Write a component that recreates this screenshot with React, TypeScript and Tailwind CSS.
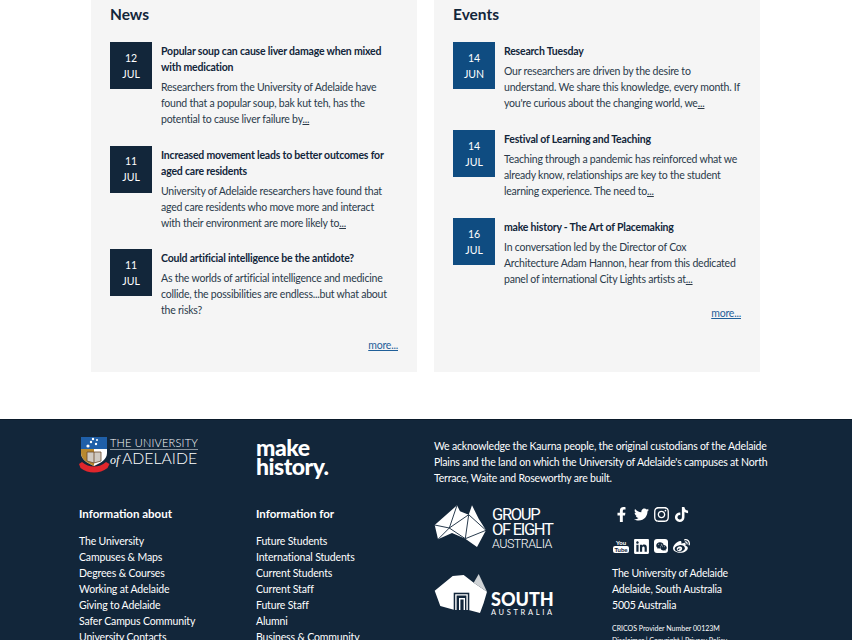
import { FaFacebookF, FaInstagram, FaLinkedin, FaTiktok, FaTwitter, FaWeibo, FaWeixin } from "react-icons/fa";

const news = [
  {
    day: "12",
    month: "JUL",
    title: ["Popular soup can cause liver damage when mixed", "with medication"],
    body: [
      "Researchers from the University of Adelaide have",
      "found that a popular soup, bak kut teh, has the",
      "potential to cause liver failure by",
    ],
    dots: true,
  },
  {
    day: "11",
    month: "JUL",
    title: ["Increased movement leads to better outcomes for", "aged care residents"],
    body: [
      "University of Adelaide researchers have found that",
      "aged care residents who move more and interact",
      "with their environment are more likely to",
    ],
    dots: true,
  },
  {
    day: "11",
    month: "JUL",
    title: ["Could artificial intelligence be the antidote?"],
    body: [
      "As the worlds of artificial intelligence and medicine",
      "collide, the possibilities are endless...but what about",
      "the risks?",
    ],
    dots: false,
  },
];

const events = [
  {
    day: "14",
    month: "JUN",
    title: ["Research Tuesday"],
    body: [
      "Our researchers are driven by the desire to",
      "understand. We share this knowledge, every month. If",
      "you're curious about the changing world, we",
    ],
    dots: true,
  },
  {
    day: "14",
    month: "JUL",
    title: ["Festival of Learning and Teaching"],
    body: [
      "Teaching through a pandemic has reinforced what we",
      "already know, relationships are key to the student",
      "learning experience. The need to",
    ],
    dots: true,
  },
  {
    day: "16",
    month: "JUL",
    title: ["make history - The Art of Placemaking"],
    body: [
      "In conversation led by the Director of Cox",
      "Architecture Adam Hannon, hear from this dedicated",
      "panel of international City Lights artists at",
    ],
    dots: true,
  },
];

const infoAbout = [
  "The University",
  "Campuses & Maps",
  "Degrees & Courses",
  "Working at Adelaide",
  "Giving to Adelaide",
  "Safer Campus Community",
  "University Contacts",
];

const infoFor = [
  "Future Students",
  "International Students",
  "Current Students",
  "Current Staff",
  "Future Staff",
  "Alumni",
  "Business & Community",
];

type Item = (typeof news)[number];

function Story({ item, boxColor }: { item: Item; boxColor: string }) {
  return (
    <div className="flex">
      <div
        className={`flex h-[47px] w-[42px] shrink-0 flex-col items-center justify-center text-[10.5px] leading-[16px] text-white ${boxColor}`}
      >
        <span>{item.day}</span>
        <span>{item.month}</span>
      </div>
      <div className="ml-[9px] whitespace-nowrap pt-px">
        <h3 className="text-[10.5px] font-bold leading-[16px] tracking-[-0.2px] text-[#12263a]">
          {item.title.map((line) => (
            <div key={line}>{line}</div>
          ))}
        </h3>
        <p className="mt-1 text-[10.5px] leading-[16px] tracking-[-0.22px] text-[#2a3a4a]">
          {item.body.map((line, i) => (
            <span key={line} className="block">
              {line}
              {item.dots && i === item.body.length - 1 && <span className="underline">...</span>}
            </span>
          ))}
        </p>
      </div>
    </div>
  );
}

function Crest() {
  return (
    <svg width="32" height="40" viewBox="2 2 32 40" className="-ml-px -mt-[2px] shrink-0">
      <path d="M5 3h26v16c0 6-6 10-13 13C11 29 5 25 5 19z" fill="#fff" />
      <path d="M5 3h26v12H5z" fill="#1f5fa8" />
      <path d="M5 15h13v17C11 29 5 25 5 19z" fill="#b8892e" />
      <path d="M11 18h14v9l-7 2-7-2z" fill="#cfcac2" stroke="#6b4a2b" strokeWidth="0.8" />
      <path d="M18 18v11" stroke="#6b4a2b" strokeWidth="0.8" />
      <circle cx="17" cy="5" r="1.2" fill="#fff" />
      <circle cx="21" cy="6" r="1" fill="#fff" />
      <circle cx="15" cy="8" r="1.2" fill="#fff" />
      <circle cx="20" cy="10" r="1.2" fill="#fff" />
      <circle cx="12" cy="12" r="1.6" fill="#fff" />
      <path d="M3 30l3-2c7 6 17 6 24 0l3.5 2-2 4c-8 6-19 6-27 0z" fill="#e0262c" />
    </svg>
  );
}

function Go8Mark() {
  return (
    <svg width="53" height="44" viewBox="2 2 53 44" className="shrink-0">
      <path
        d="M2.7 23 25 3.3l3 6 8.7 3.4L40 3.3l6.7 13.4L54 28.3 45 45l-11.7-8.3L20 31 6 37.3z"
        fill="#fff"
      />
      <path
        d="M2.7 23 17.3 26 25 3.3M17.3 26 36.7 12.7 33.3 36.7 17.3 26M33.3 36.7 54 28.3 36.7 12.7M6 37.3 17.3 26"
        fill="none"
        stroke="#12263a"
        strokeWidth="0.9"
      />
    </svg>
  );
}

function SaMark() {
  return (
    <svg width="54" height="42" viewBox="2 3 54 42" className="shrink-0">
      <path d="M2.7 20.7 20.7 6 31.7 5l10 7.7L55 21.7 51.7 33 48 43 36.7 40H22.7L8.3 36z" fill="#fff" />
      <path d="M41.7 12.7 46.7 4 55 21.7z" fill="#cfd3d6" />
      <path d="M21.7 40V22.7h15.6V40z" fill="#12263a" />
      <path d="M23.2 40V24.2h12.6V40h-1.4V25.6h-9.8V40z" fill="#fff" />
      <path d="M27 40V28h6v12h-1.4V29.4h-3.2V40z" fill="#fff" />
    </svg>
  );
}

export default function App() {
  return (
    <div className="h-[640px] w-[852px] overflow-hidden bg-white font-['Lato',sans-serif]">
      <div className="flex h-[372px] gap-[17px] pl-[91px]">
        <section className="flex w-[326px] flex-col bg-[#f5f5f5] pl-[19px] pr-[19px]">
          <h2 className="mt-[3px] h-[39px] text-[15.5px] font-bold leading-[22px] text-[#12263a]">News</h2>
          <div className="flex flex-col gap-[18.5px]">
            {news.map((item) => (
              <Story key={item.title[0]} item={item} boxColor="bg-[#12263a]" />
            ))}
          </div>
          <a className="mt-[19px] self-end text-[10.5px] leading-[16px] tracking-[-0.2px] text-[#1f5f99] underline">more...</a>
        </section>
        <section className="flex w-[326px] flex-col bg-[#f5f5f5] pl-[19px] pr-[19px]">
          <h2 className="mt-[3px] h-[39px] text-[15.5px] font-bold leading-[22px] text-[#12263a]">Events</h2>
          <div className="flex flex-col gap-[19px]">
            {events.map((item) => (
              <Story key={item.title[0]} item={item} boxColor="bg-[#0f4c81]" />
            ))}
          </div>
          <a className="mt-[18px] self-end text-[10.5px] leading-[16px] tracking-[-0.2px] text-[#1f5f99] underline">more...</a>
        </section>
      </div>

      <footer className="mt-[47px] grid h-[221px] grid-cols-[177px_178px_178px_1fr] content-start border-t border-[#0b1a2a] bg-[#12263a] pl-[79px] pt-[18px] text-white">
        <div>
          <div className="flex h-[40px] items-start">
            <Crest />
            <div className="whitespace-nowrap">
              <div className="-mt-px border-b border-white/50 pb-[1px] text-[11px] font-light leading-[11px] tracking-[0.2px]">
                THE UNIVERSITY
              </div>
              <div className="flex items-baseline text-[15.8px] font-light leading-[15px]">
                <i className="w-[12px] font-['Liberation_Serif',serif] text-[12px]">of</i>ADELAIDE
              </div>
            </div>
          </div>
          <h4 className="mt-[28px] text-[11.5px] font-bold leading-[16px]">Information about</h4>
          <ul className="mt-[11px] text-[10.5px] leading-[16px] tracking-[-0.15px]">
            {infoAbout.map((link) => (
              <li key={link}>{link}</li>
            ))}
          </ul>
        </div>

        <div>
          <div className="h-[40px] text-[23px] font-black leading-[19px] tracking-[-0.5px]">
            make
            <br />
            history.
          </div>
          <h4 className="mt-[28px] text-[11.5px] font-bold leading-[16px]">Information for</h4>
          <ul className="mt-[11px] text-[10.5px] leading-[16px] tracking-[-0.15px]">
            {infoFor.map((link) => (
              <li key={link}>{link}</li>
            ))}
          </ul>
        </div>

        <div className="col-span-2 grid grid-cols-[178px_1fr] content-start">
          <p className="col-span-2 whitespace-nowrap text-[10.5px] leading-[16px] tracking-[-0.2px]">
            We acknowledge the Kaurna people, the original custodians of the Adelaide
            <br />
            Plains and the land on which the University of Adelaide's campuses at North
            <br />
            Terrace, Waite and Roseworthy are built.
          </p>
          <div className="mt-[18px]">
            <div className="flex h-[45px] items-start">
              <Go8Mark />
              <div className="ml-[5px] mt-[3px] font-['Roboto',sans-serif] text-[16.5px] leading-[15px] tracking-[-1.3px]">
                GROUP
                <br />
                OF EIGHT
                <br />
                <span className="mt-px block text-[12.5px] font-light leading-[12px] tracking-[-0.5px]">AUSTRALIA</span>
              </div>
            </div>
            <div className="mt-[24px] flex items-start">
              <SaMark />
              <div className="ml-[3px] mt-[17px]">
                <div className="text-[18px] font-black leading-[18px]">SOUTH</div>
                <div className="mt-px text-[7.5px] leading-[7px] tracking-[2.65px]">AUSTRALIA</div>
              </div>
            </div>
          </div>
          <div className="mt-[19px] -ml-px">
            <div className="flex h-[18px] text-[15px]">
              <span className="flex w-5 items-center justify-center"><FaFacebookF /></span>
              <span className="flex w-5 items-center justify-center"><FaTwitter /></span>
              <span className="flex w-5 items-center justify-center text-[17px]"><FaInstagram /></span>
              <span className="flex w-5 items-center justify-center"><FaTiktok /></span>
            </div>
            <div className="mt-[14px] flex h-[18px] text-[17px]">
              <span className="flex w-5 flex-col items-center justify-center text-[6px] font-bold leading-[7px]">
                <span>You</span>
                <span className="rounded-[2px] bg-white px-[1px] text-[#12263a]">Tube</span>
              </span>
              <span className="flex w-5 items-center justify-center"><FaLinkedin /></span>
              <span className="flex w-5 items-center justify-center">
                <span className="flex h-[14px] w-[14px] items-center justify-center rounded-[3px] bg-white text-[11px] text-[#12263a]">
                  <FaWeixin />
                </span>
              </span>
              <span className="flex w-5 items-center justify-center"><FaWeibo /></span>
            </div>
            <address className="ml-px mt-[10px] text-[10.5px] not-italic leading-[16px] tracking-[-0.2px]">
              The University of Adelaide
              <br />
              Adelaide, South Australia
              <br />
              5005 Australia
            </address>
            <p className="ml-px mt-[9px] whitespace-nowrap text-[7px] leading-[12px]">CRICOS Provider Number 00123M</p>
            <p className="ml-px whitespace-nowrap text-[7px] leading-[12px]">Disclaimer | Copyright | Privacy Policy</p>
          </div>
        </div>
      </footer>
    </div>
  );
}
